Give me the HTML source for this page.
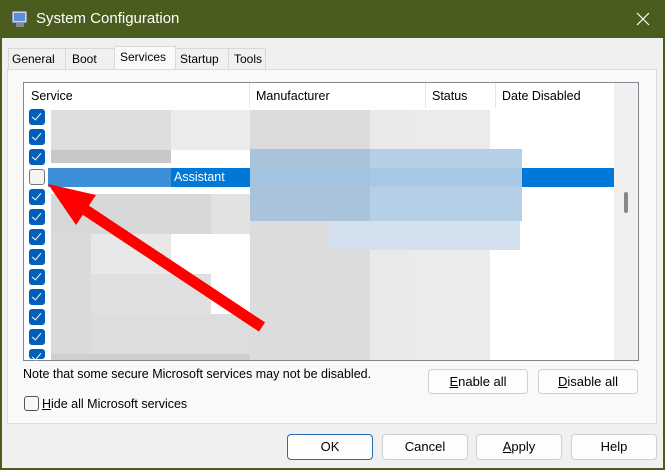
<!DOCTYPE html>
<html><head><meta charset="utf-8"><style>
*{box-sizing:border-box;margin:0;padding:0}
body{width:665px;height:470px;background:#4b5c1f;font-family:"Liberation Sans",sans-serif;font-size:12.5px;color:#000;position:relative;overflow:hidden}
.a{position:absolute}
.win{left:2px;top:38px;width:661px;height:430px;background:#f0f0f0}
.btn{position:absolute;background:#fdfdfd;border:1px solid #d0d0d0;border-radius:4px;text-align:center;font-size:13px;line-height:24px}
.cb{position:absolute;left:29px;width:16px;height:16px;border-radius:3px;background:#005fb8}
.cb:after{content:"";position:absolute;left:5px;top:2px;width:4px;height:8px;border:solid #fff;border-width:0 1px 1px 0;transform:rotate(40deg)}
.g{position:absolute}
</style></head><body>
<svg class="a" style="left:10px;top:9px" width="20" height="20" viewBox="0 0 20 20"><rect x="2" y="2" width="15" height="12" fill="#cfd8e6" stroke="#556" stroke-width="1"/><rect x="4" y="4" width="11" height="8" fill="#5a8fd6"/><rect x="6" y="14" width="8" height="4" fill="#889"/></svg>
<div class="a" style="left:36px;top:10px;color:#fff;font-size:15px">System Configuration</div>
<svg class="a" style="left:636px;top:12px" width="14" height="14"><path d="M1 1L13 13M13 1L1 13" stroke="#fff" stroke-width="1.2"/></svg>
<div class="a win"></div>
<!-- tabs -->
<div class="a" style="left:8px;top:48px;width:258px;height:21px;background:#f0f0f0;border:1px solid #d9d9d9;border-bottom:none"></div>
<div class="a" style="left:12px;top:52px;font-size:12px">General</div>
<div class="a" style="left:65px;top:48px;width:1px;height:21px;background:#d9d9d9"></div>
<div class="a" style="left:72px;top:52px;font-size:12px">Boot</div>
<div class="a" style="left:114px;top:46px;width:62px;height:24px;background:#f9f9f9;border:1px solid #d9d9d9;border-bottom:none"></div>
<div class="a" style="left:120px;top:50px;font-size:12px">Services</div>
<div class="a" style="left:180px;top:52px;font-size:12px">Startup</div>
<div class="a" style="left:228px;top:48px;width:1px;height:21px;background:#d9d9d9"></div>
<div class="a" style="left:234px;top:52px;font-size:12px">Tools</div>
<!-- panel -->
<div class="a" style="left:7px;top:69px;width:650px;height:355px;background:#f9f9f9;border:1px solid #dcdcdc"></div>
<!-- listbox -->
<div class="a" style="left:23px;top:82px;width:616px;height:279px;background:#fff;border:1px solid #828790;overflow:hidden">
 <div class="a" style="left:7px;top:6px">Service</div>
 <div class="a" style="left:225px;top:0;width:1px;height:25px;background:#e5e5e5"></div>
 <div class="a" style="left:232px;top:6px">Manufacturer</div>
 <div class="a" style="left:401px;top:0;width:1px;height:25px;background:#e5e5e5"></div>
 <div class="a" style="left:408px;top:6px">Status</div>
 <div class="a" style="left:471px;top:0;width:1px;height:25px;background:#e5e5e5"></div>
 <div class="a" style="left:478px;top:6px">Date Disabled</div>
 <div class="a" style="left:590px;top:0;width:24px;height:277px;background:#f0f0f0"></div>
 <div class="a" style="left:600px;top:109px;width:4px;height:21px;background:#888;border-radius:2px"></div>
 <div class="g" style="left:27px;top:27px;width:200px;height:40px;background:#ececec"></div>
 <div class="g" style="left:27px;top:27px;width:120px;height:40px;background:#dedede"></div>
 <div class="g" style="left:27px;top:67px;width:120px;height:13px;background:#c8c8c8"></div>
 <div class="g" style="left:27px;top:111px;width:230px;height:40px;background:#e2e2e2"></div>
 <div class="g" style="left:27px;top:111px;width:160px;height:40px;background:#d8d8d8"></div>
 <div class="g" style="left:27px;top:151px;width:40px;height:120px;background:#dadada"></div>
 <div class="g" style="left:67px;top:151px;width:80px;height:40px;background:#e8e8e8"></div>
 <div class="g" style="left:67px;top:191px;width:120px;height:40px;background:#e0e0e0"></div>
 <div class="g" style="left:67px;top:231px;width:160px;height:40px;background:#dddddd"></div>
 <div class="g" style="left:27px;top:271px;width:230px;height:8px;background:#cfcfcf"></div>
 <div class="g" style="left:226px;top:27px;width:170px;height:250px;background:#e9e9e9"></div>
 <div class="g" style="left:226px;top:27px;width:120px;height:250px;background:#dcdcdc"></div>
 <div class="g" style="left:386px;top:27px;width:80px;height:250px;background:#ebebeb"></div>
 <div class="g" style="left:24px;top:85px;width:566px;height:19px;background:#0078d7"></div>
 <div class="g" style="left:24px;top:85px;width:123px;height:19px;background:#3d8fd8"></div>
 <div class="a" style="left:150px;top:87px;color:#fff">Assistant</div>
 <div class="g" style="left:226px;top:66px;width:272px;height:72px;background:#b4cfe6"></div>
 <div class="g" style="left:226px;top:66px;width:120px;height:72px;background:#a9c3da"></div>
 <div class="g" style="left:306px;top:138px;width:190px;height:29px;background:#d3e1ee"></div>
 <div class="g" style="left:226px;top:85px;width:272px;height:19px;background:#9fc4e6;opacity:.6"></div>
</div>
<div class="cb" style="top:109px"></div>
<div class="cb" style="top:129px"></div>
<div class="cb" style="top:149px"></div>
<div class="a" style="left:29px;top:169px;width:16px;height:16px;border-radius:3px;background:#f4f4f4;border:1px solid #777"></div>
<div class="cb" style="top:189px"></div>
<div class="cb" style="top:209px"></div>
<div class="cb" style="top:229px"></div>
<div class="cb" style="top:249px"></div>
<div class="cb" style="top:269px"></div>
<div class="cb" style="top:289px"></div>
<div class="cb" style="top:309px"></div>
<div class="cb" style="top:329px"></div>
<div class="cb" style="top:349px;height:10px"></div>
<svg class="a" style="left:0;top:0" width="665" height="470"><line x1="262" y1="327" x2="75" y2="203" stroke="#f00" stroke-width="11"/><polygon points="48,184 96,195 76,225" fill="#f00"/></svg>
<div class="a" style="left:23px;top:367px">Note that some secure Microsoft services may not be disabled.</div>
<div class="btn" style="left:428px;top:369px;width:100px;height:25px"><u>E</u>nable all</div>
<div class="btn" style="left:538px;top:369px;width:100px;height:25px"><u>D</u>isable all</div>
<div class="a" style="left:24px;top:396px;width:15px;height:15px;border:1px solid #555;border-radius:3px;background:#f7f7f7"></div>
<div class="a" style="left:42px;top:397px"><u>H</u>ide all Microsoft services</div>
<div class="btn" style="left:287px;top:434px;width:86px;height:26px;border:1px solid #2a6eb0">OK</div>
<div class="btn" style="left:382px;top:434px;width:86px;height:26px">Cancel</div>
<div class="btn" style="left:476px;top:434px;width:86px;height:26px"><u>A</u>pply</div>
<div class="btn" style="left:571px;top:434px;width:86px;height:26px">Help</div>
</body></html>
